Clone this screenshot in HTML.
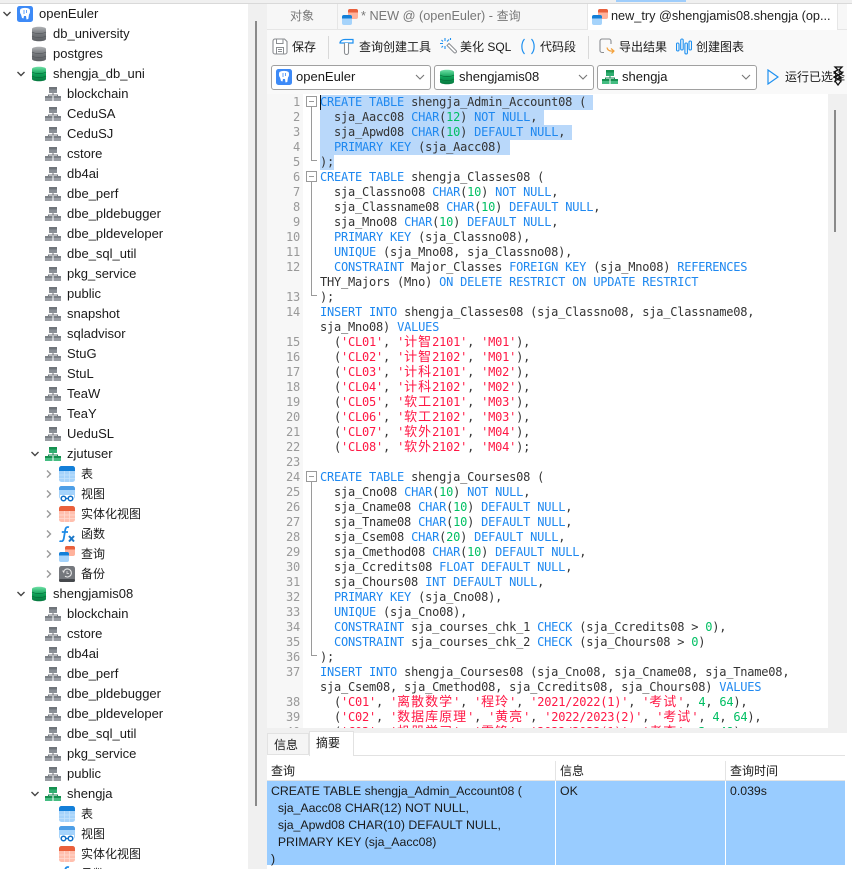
<!DOCTYPE html>
<html><head><meta charset="utf-8"><style>
html,body{margin:0;padding:0;width:852px;height:869px;overflow:hidden;background:#fff}
body{position:relative;font:13px/20px "Liberation Sans","Noto Sans CJK SC",sans-serif;color:#1a1a1a}
div,span,svg{box-sizing:border-box}
.abs{position:absolute}
.r{position:absolute;left:0;width:248px;height:20px;white-space:nowrap}
.r svg{position:absolute;top:2px;width:16px;height:16px}
.r svg.ch{top:6px;width:8px;height:8px}
.r b{font-weight:normal;position:absolute;top:0}
.r b.z{font-size:12px}
.l0 .ch{left:3px}.l0 .ic{left:17px}.l0 b{left:39px}
.l1 .ch{left:17px}.l1 .ic{left:31px}.l1 b{left:53px}
.l2 .ch{left:31px}.l2 .ic{left:45px}.l2 b{left:67px}
.l3 .ch{left:45px}.l3 .ic{left:59px}.l3 b{left:81px}
.code{position:absolute;left:320px;top:94px;width:508px;height:634px;overflow:hidden;font:12px/15px "DejaVu Sans Mono","Liberation Mono",monospace;letter-spacing:-.22px;color:#333}
.code div{height:15px;white-space:pre;line-height:15px}
.nums{position:absolute;left:267px;top:94px;width:36px;height:634px;overflow:hidden;background:#f7f7f7;font:12px/15px "DejaVu Sans Mono",monospace;letter-spacing:-.22px;color:#999;text-align:right;padding-right:3px}
.nums div{height:15px}
.k{color:#1e88f0}.n{color:#00bf63}.s{color:#ff1744}
.c{font-family:"Noto Sans CJK SC",sans-serif;font-size:13px;line-height:0;letter-spacing:1px}
.sel{position:absolute;background:#b9d8fa;height:15px;left:320px}
.tb{position:absolute;top:37px;height:20px;line-height:20px;white-space:nowrap;font-size:12px}
.combo{position:absolute;top:65px;height:25px;background:#fff;border:1px solid #a0a0a0;border-radius:3px;line-height:22px}
.combo span{position:absolute;left:24px;top:0}
.combo svg.i{position:absolute;left:4px;top:3px;width:16px;height:16px}
.combo svg.d{position:absolute;right:5px;top:8px;width:10px;height:7px}
.res{position:absolute;top:781px;height:84px;background:#99ccff;font-size:12.3px;line-height:17px;padding:2px 4px;white-space:pre}
.hd{position:absolute;top:762px;height:18px;line-height:19px;padding-left:4px;background:#fff;font-size:12px}
.z12{font-size:12px}
</style></head><body>
<svg width="0" height="0" style="position:absolute"><defs>
<linearGradient id="gg" x1="0" y1="0" x2="0" y2="1"><stop offset="0" stop-color="#b0b2b5"/><stop offset=".5" stop-color="#74777b"/><stop offset="1" stop-color="#5d6064"/></linearGradient>
<linearGradient id="gr" x1="0" y1="0" x2="0" y2="1"><stop offset="0" stop-color="#6fe0a6"/><stop offset=".5" stop-color="#0fa257"/><stop offset="1" stop-color="#07783f"/></linearGradient>
<symbol id="chd" viewBox="0 0 8 8"><path d="M.5 2 4 5.500 7.500 2" fill="none" stroke="#444" stroke-width="1.400"/></symbol>
<symbol id="chr" viewBox="0 0 8 8"><path d="M2 .5 5.500 4 2 7.500" fill="none" stroke="#999" stroke-width="1.400"/></symbol>
<symbol id="dbg" viewBox="0 0 16 16"><path d="M1 3C1 0 15 0 15 3V13C15 16 1 16 1 13Z" fill="url(#gg)"/><path d="M1 6C4 8 12 8 15 6M1 10C4 12 12 12 15 10" fill="none" stroke="#55585c" stroke-width=".7"/></symbol>
<symbol id="dbn" viewBox="0 0 16 16"><path d="M1 3C1 0 15 0 15 3V13C15 16 1 16 1 13Z" fill="url(#gr)"/><path d="M1 6C4 8 12 8 15 6M1 10C4 12 12 12 15 10" fill="none" stroke="#066b38" stroke-width=".7"/></symbol>
<symbol id="pg" viewBox="0 0 16 16"><rect width="16" height="16" rx="2.500" fill="#3d8af7"/><path d="M3.500 3C6 1.500 10 1.500 12.500 3 13.500 5 13 7.500 12 8.500L11.300 13 9.500 13.500 9 10H7L6.500 12.500 5 12 4 8.500C3 7.500 2.500 5 3.500 3Z" fill="#fff"/><path d="M7 4v4M9.500 4v3" stroke="#3d8af7" stroke-width=".8"/></symbol>
<symbol id="scg" viewBox="0 0 16 16"><path d="M8 7V9M3.500 11V9H12.500V11" fill="none" stroke="#75797f" stroke-width="1"/><rect x="4" y="1" width="8" height="6" fill="#8a8f95"/><rect x="4" y="1" width="8" height="2.500" fill="#6f747a"/><rect x="0" y="10" width="7.500" height="5" fill="#9a9ea4"/><rect x="0" y="10" width="7.500" height="2" fill="#7b8086"/><rect x="8.500" y="10" width="7.500" height="5" fill="#9a9ea4"/><rect x="8.500" y="10" width="7.500" height="2" fill="#7b8086"/></symbol>
<symbol id="scn" viewBox="0 0 16 16"><path d="M8 7V9M3.500 11V9H12.500V11" fill="none" stroke="#1b8a55" stroke-width="1"/><rect x="4" y="1" width="8" height="6" fill="#2fae70"/><rect x="4" y="1" width="8" height="2.500" fill="#15904f"/><rect x="0" y="10" width="7.500" height="5" fill="#45bd82"/><rect x="0" y="10" width="7.500" height="2" fill="#15904f"/><rect x="8.500" y="10" width="7.500" height="5" fill="#45bd82"/><rect x="8.500" y="10" width="7.500" height="2" fill="#15904f"/></symbol>
<symbol id="tbl" viewBox="0 0 16 16"><rect width="16" height="16" rx="2.500" fill="#a5d3fb"/><path d="M0 5V2.500A2.500 2.500 0 0 1 2.500 0h11A2.500 2.500 0 0 1 16 2.500V5Z" fill="#137fd8"/><path d="M5.500 5v11M10.500 5v11M0 9h16M0 12.500h16" stroke="#c5e3fc" stroke-width=".8"/></symbol>
<symbol id="vw" viewBox="0 0 16 16"><rect width="16" height="13" rx="2.500" fill="#a5d3fb"/><path d="M0 4V2.500A2.500 2.500 0 0 1 2.500 0h11A2.500 2.500 0 0 1 16 2.500V4Z" fill="#4d9ee6"/><rect x="1" y="9" width="14" height="7" fill="#fff"/><circle cx="4.500" cy="12.500" r="2.300" fill="#fff" stroke="#0e6fc7" stroke-width="1.500"/><circle cx="11.500" cy="12.500" r="2.300" fill="#fff" stroke="#0e6fc7" stroke-width="1.500"/><path d="M6.500 12.500h3" stroke="#0e6fc7" stroke-width="1.200"/></symbol>
<symbol id="mv" viewBox="0 0 16 16"><rect width="16" height="16" rx="2.500" fill="#ffbfae"/><path d="M0 5V2.500A2.500 2.500 0 0 1 2.500 0h11A2.500 2.500 0 0 1 16 2.500V5Z" fill="#e9603c"/><path d="M5.500 5v11M10.500 5v11M0 9h16M0 12.500h16" stroke="#ffdcd2" stroke-width=".8"/></symbol>
<symbol id="fx" viewBox="0 0 16 16"><path d="M10 1.200C7.500 .4 6.500 2 6.200 4L4.800 12.500C4.400 15 2.800 16 .5 15M2.800 6H9" fill="none" stroke="#1c8ae6" stroke-width="1.800"/><path d="M10 10l5 5.500M15 10l-5 5.500" stroke="#1c78c8" stroke-width="2"/></symbol>
<symbol id="qy" viewBox="0 0 16 16"><rect x="6" y="0" width="10" height="10" rx="2" fill="#ffb29c"/><path d="M6 3.500V2a2 2 0 0 1 2-2h6a2 2 0 0 1 2 2v1.500Z" fill="#e9603c"/><rect x="0" y="6" width="10" height="10" rx="2" fill="#a5d3fb"/><path d="M0 9.500V8a2 2 0 0 1 2-2h6a2 2 0 0 1 2 2v1.500Z" fill="#137fd8"/></symbol>
<symbol id="bk" viewBox="0 0 16 16"><rect width="16" height="16" rx="2.500" fill="#75787d"/><rect y="13" width="16" height="3" rx="1.500" fill="#45484c"/><path d="M4.500 6A4 4 0 1 1 6 10.200" fill="none" stroke="#e8e8e8" stroke-width="1.100"/><path d="M3 4.500 5.500 5 5 7.500Z" fill="#e8e8e8"/><path d="M8 5v2.500h2" fill="none" stroke="#e8e8e8" stroke-width=".8"/></symbol>
</defs></svg>

<!-- top strip -->
<div class="abs" style="left:0;top:0;width:852px;height:4px;background:#f0f0f0;border-bottom:1px solid #d9d9d9"></div>
<div class="abs" style="left:616px;top:0;width:70px;height:2px;background:#9fcdfb"></div>

<!-- sidebar -->
<div class="abs" style="left:0;top:4px;width:248px;height:865px;overflow:hidden">
<div class="abs" style="left:0;top:-4px;width:248px;height:873px">
<div class="r l0" style="top:4px"><svg class="ch"><use href="#chd"/></svg><svg class="ic"><use href="#pg"/></svg><b>openEuler</b></div>
<div class="r l1" style="top:24px"><svg class="ic"><use href="#dbg"/></svg><b>db_university</b></div>
<div class="r l1" style="top:44px"><svg class="ic"><use href="#dbg"/></svg><b>postgres</b></div>
<div class="r l1" style="top:64px"><svg class="ch"><use href="#chd"/></svg><svg class="ic"><use href="#dbn"/></svg><b>shengja_db_uni</b></div>
<div class="r l2" style="top:84px"><svg class="ic"><use href="#scg"/></svg><b>blockchain</b></div>
<div class="r l2" style="top:104px"><svg class="ic"><use href="#scg"/></svg><b>CeduSA</b></div>
<div class="r l2" style="top:124px"><svg class="ic"><use href="#scg"/></svg><b>CeduSJ</b></div>
<div class="r l2" style="top:144px"><svg class="ic"><use href="#scg"/></svg><b>cstore</b></div>
<div class="r l2" style="top:164px"><svg class="ic"><use href="#scg"/></svg><b>db4ai</b></div>
<div class="r l2" style="top:184px"><svg class="ic"><use href="#scg"/></svg><b>dbe_perf</b></div>
<div class="r l2" style="top:204px"><svg class="ic"><use href="#scg"/></svg><b>dbe_pldebugger</b></div>
<div class="r l2" style="top:224px"><svg class="ic"><use href="#scg"/></svg><b>dbe_pldeveloper</b></div>
<div class="r l2" style="top:244px"><svg class="ic"><use href="#scg"/></svg><b>dbe_sql_util</b></div>
<div class="r l2" style="top:264px"><svg class="ic"><use href="#scg"/></svg><b>pkg_service</b></div>
<div class="r l2" style="top:284px"><svg class="ic"><use href="#scg"/></svg><b>public</b></div>
<div class="r l2" style="top:304px"><svg class="ic"><use href="#scg"/></svg><b>snapshot</b></div>
<div class="r l2" style="top:324px"><svg class="ic"><use href="#scg"/></svg><b>sqladvisor</b></div>
<div class="r l2" style="top:344px"><svg class="ic"><use href="#scg"/></svg><b>StuG</b></div>
<div class="r l2" style="top:364px"><svg class="ic"><use href="#scg"/></svg><b>StuL</b></div>
<div class="r l2" style="top:384px"><svg class="ic"><use href="#scg"/></svg><b>TeaW</b></div>
<div class="r l2" style="top:404px"><svg class="ic"><use href="#scg"/></svg><b>TeaY</b></div>
<div class="r l2" style="top:424px"><svg class="ic"><use href="#scg"/></svg><b>UeduSL</b></div>
<div class="r l2" style="top:444px"><svg class="ch"><use href="#chd"/></svg><svg class="ic"><use href="#scn"/></svg><b>zjutuser</b></div>
<div class="r l3" style="top:464px"><svg class="ch"><use href="#chr"/></svg><svg class="ic"><use href="#tbl"/></svg><b class="z">表</b></div>
<div class="r l3" style="top:484px"><svg class="ch"><use href="#chr"/></svg><svg class="ic"><use href="#vw"/></svg><b class="z">视图</b></div>
<div class="r l3" style="top:504px"><svg class="ch"><use href="#chr"/></svg><svg class="ic"><use href="#mv"/></svg><b class="z">实体化视图</b></div>
<div class="r l3" style="top:524px"><svg class="ch"><use href="#chr"/></svg><svg class="ic"><use href="#fx"/></svg><b class="z">函数</b></div>
<div class="r l3" style="top:544px"><svg class="ch"><use href="#chr"/></svg><svg class="ic"><use href="#qy"/></svg><b class="z">查询</b></div>
<div class="r l3" style="top:564px"><svg class="ch"><use href="#chr"/></svg><svg class="ic"><use href="#bk"/></svg><b class="z">备份</b></div>
<div class="r l1" style="top:584px"><svg class="ch"><use href="#chd"/></svg><svg class="ic"><use href="#dbn"/></svg><b>shengjamis08</b></div>
<div class="r l2" style="top:604px"><svg class="ic"><use href="#scg"/></svg><b>blockchain</b></div>
<div class="r l2" style="top:624px"><svg class="ic"><use href="#scg"/></svg><b>cstore</b></div>
<div class="r l2" style="top:644px"><svg class="ic"><use href="#scg"/></svg><b>db4ai</b></div>
<div class="r l2" style="top:664px"><svg class="ic"><use href="#scg"/></svg><b>dbe_perf</b></div>
<div class="r l2" style="top:684px"><svg class="ic"><use href="#scg"/></svg><b>dbe_pldebugger</b></div>
<div class="r l2" style="top:704px"><svg class="ic"><use href="#scg"/></svg><b>dbe_pldeveloper</b></div>
<div class="r l2" style="top:724px"><svg class="ic"><use href="#scg"/></svg><b>dbe_sql_util</b></div>
<div class="r l2" style="top:744px"><svg class="ic"><use href="#scg"/></svg><b>pkg_service</b></div>
<div class="r l2" style="top:764px"><svg class="ic"><use href="#scg"/></svg><b>public</b></div>
<div class="r l2" style="top:784px"><svg class="ch"><use href="#chd"/></svg><svg class="ic"><use href="#scn"/></svg><b>shengja</b></div>
<div class="r l3" style="top:804px"><svg class="ic"><use href="#tbl"/></svg><b class="z">表</b></div>
<div class="r l3" style="top:824px"><svg class="ic"><use href="#vw"/></svg><b class="z">视图</b></div>
<div class="r l3" style="top:844px"><svg class="ic"><use href="#mv"/></svg><b class="z">实体化视图</b></div>
<div class="r l3" style="top:864px"><svg class="ic"><use href="#fx"/></svg><b class="z">函数</b></div>
</div></div>
<!-- sidebar scrollbar + gutter -->
<div class="abs" style="left:248px;top:4px;width:19px;height:865px;background:#f0f0f0"></div>
<div class="abs" style="left:255px;top:21px;width:2px;height:785px;background:#8a8a8a"></div>

<!-- tabs -->
<div class="abs" style="left:267px;top:4px;width:585px;height:26px;background:#e6e6e6"></div>
<div class="abs" style="left:267px;top:4px;width:70px;height:25px;background:#f7f7f7;text-align:center;line-height:25px;color:#777;font-size:12px">对象</div>
<div class="abs" style="left:338px;top:4px;width:249px;height:25px;background:#f7f7f7;line-height:25px;color:#777;white-space:nowrap;padding-left:23px;font-size:12.7px">* NEW @ (openEuler) - <span class="z12">查询</span></div>
<svg class="abs" style="left:342px;top:9px;width:16px;height:16px"><use href="#qy"/></svg>
<div class="abs" style="left:588px;top:4px;width:249px;height:26px;background:#fff;line-height:25px;color:#222;white-space:nowrap;padding-left:23px;font-size:12.7px">new_try @shengjamis08.shengja (op...</div>
<svg class="abs" style="left:592px;top:9px;width:16px;height:16px"><use href="#qy"/></svg>
<div class="abs" style="left:838px;top:4px;width:9px;height:25px;background:#f7f7f7"></div>
<div class="abs" style="left:847px;top:4px;width:5px;height:865px;background:#fff"></div>

<!-- toolbar area -->
<div class="abs" style="left:267px;top:30px;width:580px;height:64px;background:#f9f9f9"></div>
<svg class="abs" style="left:272px;top:38px;width:16px;height:17px" viewBox="0 0 16 17"><path d="M1 3A2 2 0 0 1 3 1H12.500L15 3.500V14A2 2 0 0 1 13 16H3A2 2 0 0 1 1 14Z" fill="#fff" stroke="#8a8d91" stroke-width="1.100"/><path d="M4.500 1.500V5.500H11V1.500M4.500 15.500V9.500H11.500V15.500M6 11.500H10M6 13.500H10" fill="none" stroke="#8a8d91"/></svg>
<div class="tb" style="left:292px">保存</div>
<div class="abs" style="left:328px;top:36px;width:1px;height:23px;background:#d9d9d9"></div>
<svg class="abs" style="left:339px;top:38px;width:15px;height:17px" viewBox="0 0 15 17"><path d="M1 4.500C2 2 4 1.500 6 1.500H14V5H1Z" fill="#fff" stroke="#1e90f0" stroke-width="1.200"/><path d="M5.500 5V14.500A2 2 0 0 0 9.500 14.500V5" fill="#fff" stroke="#8a8d91" stroke-width="1.100"/></svg>
<div class="tb" style="left:359px">查询创建工具</div>
<svg class="abs" style="left:440px;top:38px;width:17px;height:17px" viewBox="0 0 17 17"><path d="M7 7.500 9 5.500 16 12.500A1.400 1.400 0 0 1 14 14.500Z" fill="#fff" stroke="#8a8d91"/><path d="M5 0V3M5 8V11M0 5.500H3M7 3.500 9 1.500M1.500 2 3 3.500M1.500 9.500 3 8M10.500 0V2" stroke="#1e90f0" stroke-width="1.100"/></svg>
<div class="tb" style="left:460px">美化 SQL</div>
<svg class="abs" style="left:520px;top:38px;width:16px;height:17px" viewBox="0 0 16 17"><path d="M4.500 1C1 5 1 12 4.500 16M11.500 1C15 5 15 12 11.500 16" fill="none" stroke="#1e90f0" stroke-width="1.200"/></svg>
<div class="tb" style="left:540px">代码段</div>
<div class="abs" style="left:588px;top:36px;width:1px;height:23px;background:#d9d9d9"></div>
<svg class="abs" style="left:599px;top:38px;width:16px;height:17px" viewBox="0 0 16 17"><path d="M5 14.500H3A2 2 0 0 1 1 12.500V3A2 2 0 0 1 3 1H10A2 2 0 0 1 12 3V6" fill="none" stroke="#8a8d91" stroke-width="1.100"/><path d="M8 9.500C8.500 12.500 10.500 13.500 14.500 13M12 10.500 15 13 12.500 15.500" fill="none" stroke="#f4a13a" stroke-width="1.200"/></svg>
<div class="tb" style="left:619px">导出结果</div>
<svg class="abs" style="left:676px;top:38px;width:16px;height:17px" viewBox="0 0 16 17" fill="none" stroke="#1e90f0" stroke-width="1.100"><rect x=".5" y="5" width="2.500" height="8" rx="1.200"/><rect x="4.700" y="1" width="2.500" height="11" rx="1.200"/><rect x="8.900" y="5" width="2.500" height="11" rx="1.200"/><rect x="13" y="3" width="2.500" height="9" rx="1.200"/></svg>
<div class="tb" style="left:696px">创建图表</div>

<!-- combos -->
<div class="combo" style="left:271px;width:160px"><svg class="i"><use href="#pg"/></svg><span>openEuler</span><svg class="d" viewBox="0 0 10 7"><path d="M1 1 5 5 9 1" fill="none" stroke="#777" stroke-width="1.100"/></svg></div>
<div class="combo" style="left:434px;width:160px"><svg class="i"><use href="#dbn"/></svg><span>shengjamis08</span><svg class="d" viewBox="0 0 10 7"><path d="M1 1 5 5 9 1" fill="none" stroke="#777" stroke-width="1.100"/></svg></div>
<div class="combo" style="left:597px;width:160px"><svg class="i"><use href="#scn"/></svg><span>shengja</span><svg class="d" viewBox="0 0 10 7"><path d="M1 1 5 5 9 1" fill="none" stroke="#777" stroke-width="1.100"/></svg></div>
<svg class="abs" style="left:767px;top:69px;width:12px;height:16px" viewBox="0 0 12 16"><path d="M1 1 11 8 1 15Z" fill="none" stroke="#1e90f0" stroke-width="1.200"/></svg>
<div class="tb" style="left:785px;top:67px">运行已选择</div>
<svg class="abs" style="left:831px;top:66px;width:14px;height:20px" viewBox="0 0 14 20"><path d="M4 1 11 1 8 4 11 7 7 9 10 12 7 13 10 15 7 19 4 15 7 13 3 11 7 9 3 6 7 4Z" fill="none" stroke="#111" stroke-width="1.300"/></svg>

<!-- editor -->
<div class="abs" style="left:267px;top:94px;width:561px;height:634px;background:#fff"></div>
<div class="nums">
<div style="height:1px"></div>
<div>1</div><div>2</div><div>3</div><div>4</div><div>5</div><div>6</div><div>7</div><div>8</div><div>9</div><div>10</div><div>11</div><div>12</div><div></div><div>13</div><div>14</div><div></div><div>15</div><div>16</div><div>17</div><div>18</div><div>19</div><div>20</div><div>21</div><div>22</div><div>23</div><div>24</div><div>25</div><div>26</div><div>27</div><div>28</div><div>29</div><div>30</div><div>31</div><div>32</div><div>33</div><div>34</div><div>35</div><div>36</div><div>37</div><div></div><div>38</div><div>39</div><div>40</div>
</div>
<div class="sel" style="top:95px;width:273px"></div>
<div class="sel" style="top:110px;width:224px"></div>
<div class="sel" style="top:125px;width:252px"></div>
<div class="sel" style="top:140px;width:190px"></div>
<div class="sel" style="top:155px;width:14px"></div>
<div class="abs" style="left:320px;top:95px;width:1px;height:15px;background:#111"></div>
<!-- fold markers -->
<svg class="abs" style="left:304px;top:94px;width:16px;height:580px" viewBox="0 0 16 580" fill="none" stroke="#9a9a9a">
<rect x="2.500" y="2.500" width="10" height="10" fill="#fff"/><path d="M5 7.500H10M7.500 12.500V66.500H13"/>
<rect x="2.500" y="77.500" width="10" height="10" fill="#fff"/><path d="M5 82.500H10M7.500 87.500V201.500H13"/>
<rect x="2.500" y="377.500" width="10" height="10" fill="#fff"/><path d="M5 382.500H10M7.500 387.500V561.500H13"/>
</svg>
<div class="code">
<div style="height:1px"></div>
<div><span class="k">CREATE TABLE</span> shengja_Admin_Account08 (</div>
<div>  sja_Aacc08 <span class="k">CHAR</span>(<span class="n">12</span>) <span class="k">NOT NULL</span>,</div>
<div>  sja_Apwd08 <span class="k">CHAR</span>(<span class="n">10</span>) <span class="k">DEFAULT NULL</span>,</div>
<div>  <span class="k">PRIMARY KEY</span> (sja_Aacc08)</div>
<div>);</div>
<div><span class="k">CREATE TABLE</span> shengja_Classes08 (</div>
<div>  sja_Classno08 <span class="k">CHAR</span>(<span class="n">10</span>) <span class="k">NOT NULL</span>,</div>
<div>  sja_Classname08 <span class="k">CHAR</span>(<span class="n">10</span>) <span class="k">DEFAULT NULL</span>,</div>
<div>  sja_Mno08 <span class="k">CHAR</span>(<span class="n">10</span>) <span class="k">DEFAULT NULL</span>,</div>
<div>  <span class="k">PRIMARY KEY</span> (sja_Classno08),</div>
<div>  <span class="k">UNIQUE</span> (sja_Mno08, sja_Classno08),</div>
<div>  <span class="k">CONSTRAINT</span> Major_Classes <span class="k">FOREIGN KEY</span> (sja_Mno08) <span class="k">REFERENCES</span></div>
<div>THY_Majors (Mno) <span class="k">ON DELETE RESTRICT ON UPDATE RESTRICT</span></div>
<div>);</div>
<div><span class="k">INSERT INTO</span> shengja_Classes08 (sja_Classno08, sja_Classname08,</div>
<div>sja_Mno08) <span class="k">VALUES</span></div>
<div>  (<span class="s">'CL01'</span>, <span class="s">'<span class="c">计智</span>2101'</span>, <span class="s">'M01'</span>),</div>
<div>  (<span class="s">'CL02'</span>, <span class="s">'<span class="c">计智</span>2102'</span>, <span class="s">'M01'</span>),</div>
<div>  (<span class="s">'CL03'</span>, <span class="s">'<span class="c">计科</span>2101'</span>, <span class="s">'M02'</span>),</div>
<div>  (<span class="s">'CL04'</span>, <span class="s">'<span class="c">计科</span>2102'</span>, <span class="s">'M02'</span>),</div>
<div>  (<span class="s">'CL05'</span>, <span class="s">'<span class="c">软工</span>2101'</span>, <span class="s">'M03'</span>),</div>
<div>  (<span class="s">'CL06'</span>, <span class="s">'<span class="c">软工</span>2102'</span>, <span class="s">'M03'</span>),</div>
<div>  (<span class="s">'CL07'</span>, <span class="s">'<span class="c">软外</span>2101'</span>, <span class="s">'M04'</span>),</div>
<div>  (<span class="s">'CL08'</span>, <span class="s">'<span class="c">软外</span>2102'</span>, <span class="s">'M04'</span>);</div>
<div></div>
<div><span class="k">CREATE TABLE</span> shengja_Courses08 (</div>
<div>  sja_Cno08 <span class="k">CHAR</span>(<span class="n">10</span>) <span class="k">NOT NULL</span>,</div>
<div>  sja_Cname08 <span class="k">CHAR</span>(<span class="n">10</span>) <span class="k">DEFAULT NULL</span>,</div>
<div>  sja_Tname08 <span class="k">CHAR</span>(<span class="n">10</span>) <span class="k">DEFAULT NULL</span>,</div>
<div>  sja_Csem08 <span class="k">CHAR</span>(<span class="n">20</span>) <span class="k">DEFAULT NULL</span>,</div>
<div>  sja_Cmethod08 <span class="k">CHAR</span>(<span class="n">10</span>) <span class="k">DEFAULT NULL</span>,</div>
<div>  sja_Ccredits08 <span class="k">FLOAT DEFAULT NULL</span>,</div>
<div>  sja_Chours08 <span class="k">INT DEFAULT NULL</span>,</div>
<div>  <span class="k">PRIMARY KEY</span> (sja_Cno08),</div>
<div>  <span class="k">UNIQUE</span> (sja_Cno08),</div>
<div>  <span class="k">CONSTRAINT</span> sja_courses_chk_1 <span class="k">CHECK</span> (sja_Ccredits08 &gt; <span class="n">0</span>),</div>
<div>  <span class="k">CONSTRAINT</span> sja_courses_chk_2 <span class="k">CHECK</span> (sja_Chours08 &gt; <span class="n">0</span>)</div>
<div>);</div>
<div><span class="k">INSERT INTO</span> shengja_Courses08 (sja_Cno08, sja_Cname08, sja_Tname08,</div>
<div>sja_Csem08, sja_Cmethod08, sja_Ccredits08, sja_Chours08) <span class="k">VALUES</span></div>
<div>  (<span class="s">'C01'</span>, <span class="s">'<span class="c">离散数学</span>'</span>, <span class="s">'<span class="c">程玲</span>'</span>, <span class="s">'2021/2022(1)'</span>, <span class="s">'<span class="c">考试</span>'</span>, <span class="n">4</span>, <span class="n">64</span>),</div>
<div>  (<span class="s">'C02'</span>, <span class="s">'<span class="c">数据库原理</span>'</span>, <span class="s">'<span class="c">黄亮</span>'</span>, <span class="s">'2022/2023(2)'</span>, <span class="s">'<span class="c">考试</span>'</span>, <span class="n">4</span>, <span class="n">64</span>),</div>
<div>  (<span class="s">'C03'</span>, <span class="s">'<span class="c">机器学习</span>'</span>, <span class="s">'<span class="c">雷锋</span>'</span>, <span class="s">'2022/2023(1)'</span>, <span class="s">'<span class="c">考查</span>'</span>, <span class="n">3</span>, <span class="n">48</span>),</div>
</div>
<!-- editor scrollbar -->
<div class="abs" style="left:828px;top:94px;width:19px;height:638px;background:#f0f0f0"></div>
<div class="abs" style="left:834px;top:110px;width:2px;height:122px;background:#8a8a8a"></div>

<!-- bottom panel -->
<div class="abs" style="left:267px;top:728px;width:580px;height:5px;background:#f0f0f0"></div>
<div class="abs" style="left:267px;top:733px;width:578px;height:136px;background:#fff"></div>
<div class="abs" style="left:267px;top:733px;width:42px;height:22px;background:#f5f5f5;border:1px solid #e2e2e2;line-height:22px;padding-left:6px;font-size:12px">信息</div>
<div class="abs" style="left:309px;top:731px;width:45px;height:25px;background:#fff;border:1px solid #e2e2e2;border-bottom:0;line-height:22px;padding-left:6px;font-size:12px">摘要</div>
<div class="abs" style="left:354px;top:755px;width:491px;height:1px;background:#e2e2e2"></div>
<div class="hd" style="left:267px;width:288px">查询</div>
<div class="hd" style="left:556px;width:169px">信息</div>
<div class="hd" style="left:726px;width:119px">查询时间</div>
<div class="abs" style="left:555px;top:761px;width:1px;height:19px;background:#e4e4e4"></div>
<div class="abs" style="left:725px;top:761px;width:1px;height:19px;background:#e4e4e4"></div>
<div class="abs" style="left:267px;top:780px;width:578px;height:1px;background:#e4e4e4"></div>
<div class="res" style="left:267px;width:288px">CREATE TABLE shengja_Admin_Account08 (
  sja_Aacc08 CHAR(12) NOT NULL,
  sja_Apwd08 CHAR(10) DEFAULT NULL,
  PRIMARY KEY (sja_Aacc08)
)</div>
<div class="res" style="left:556px;width:169px">OK</div>
<div class="res" style="left:726px;width:119px">0.039s</div>
</body></html>
